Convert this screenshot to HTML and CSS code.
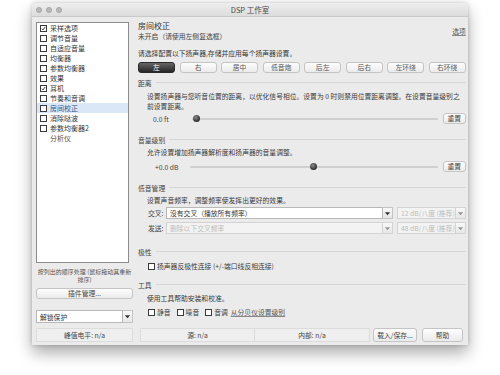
FILE: index.html
```html
<!DOCTYPE html>
<html lang="zh-CN">
<head>
<meta charset="utf-8">
<title>DSP 工作室</title>
<link rel="stylesheet" href="styles.css">
</head>
<body>
<div class="window">
  <div class="titlebar">
    <div class="lights"><span></span><span></span><span></span></div>
    <div class="title">DSP 工作室</div>
    <div></div>
  </div>
  <div class="body">
    <div class="left">
      <ul class="list">
        <li><span class="cb"><svg viewBox="0 0 8 8"><path d="M1.3 4.2 L3.2 6.2 L6.8 1.4"/></svg></span>采样选项</li>
        <li><span class="cb"></span>调节音量</li>
        <li><span class="cb"></span>自适应音量</li>
        <li><span class="cb"></span>均衡器</li>
        <li><span class="cb"></span>参数均衡器</li>
        <li><span class="cb"></span>效果</li>
        <li><span class="cb"><svg viewBox="0 0 8 8"><path d="M1.3 4.2 L3.2 6.2 L6.8 1.4"/></svg></span>耳机</li>
        <li><span class="cb"></span>节奏和音调</li>
        <li class="sel"><span class="cb"></span>房间校正</li>
        <li><span class="cb"></span>消除哒波</li>
        <li><span class="cb"></span>参数均衡器2</li>
        <li class="nocb">分析仪</li>
      </ul>
      <p class="hint">按列出的顺序处理 (鼠标拖动其重新排序)</p>
      <button class="btn plug">插件管理...</button>
      <div class="combo protect"><span class="field">解锁保护</span><span class="arrow"><svg viewBox="0 0 8 8"><path d="M1 2.5 L7 2.5 L4 6 Z"/></svg></span></div>
    </div>

    <div class="main">
      <div class="head">
        <div>
          <div class="title-main">房间校正</div>
          <div class="sub">未开启（请使用左侧复选框）</div>
        </div>
        <a class="link opt">选项</a>
      </div>
      <p class="instr">请选择配置以下扬声器,存储并应用每个扬声器设置。</p>
      <div class="speakers">
        <button class="btn spk on">左</button>
        <button class="btn spk">右</button>
        <button class="btn spk">居中</button>
        <button class="btn spk">低音炮</button>
        <button class="btn spk">后左</button>
        <button class="btn spk">后右</button>
        <button class="btn spk">左环绕</button>
        <button class="btn spk">右环绕</button>
      </div>

      <div class="ghead g-dist"><span>距离</span></div>
      <p class="desc d-dist">设置扬声器与您听音位置的距离，以优化信号相位。设置为 0 时则禁用位置距离调整。在设置音量级别之<br>前设置距离。</p>
      <div class="srow s-dist">
        <span class="sval">0.0 ft</span>
        <div class="slider"><span class="knob" style="left:2%"></span></div>
        <button class="btn reset">重置</button>
      </div>

      <div class="ghead g-vol"><span>音量级别</span></div>
      <p class="desc d-vol">允许设置增加扬声器解析度和扬声器的音量调整。</p>
      <div class="srow s-vol">
        <span class="sval">+0.0 dB</span>
        <div class="slider"><span class="knob" style="left:50%"></span></div>
        <button class="btn reset">重置</button>
      </div>

      <div class="ghead g-bass"><span>低音管理</span></div>
      <p class="desc d-bass">设置声音频率，调整频率使发挥出更好的效果。</p>
      <div class="crow c1">
        <span class="clabel">交叉:</span>
        <div class="combo big"><span class="field">没有交叉（播放所有频率）</span><span class="arrow"><svg viewBox="0 0 8 8"><path d="M1 2.5 L7 2.5 L4 6 Z"/></svg></span></div>
        <div class="combo small dis"><span class="field">12 dB/八度 (推荐)</span><span class="arrow"><svg viewBox="0 0 8 8"><path d="M1 2.5 L7 2.5 L4 6 Z"/></svg></span></div>
      </div>
      <div class="crow c2">
        <span class="clabel">发送:</span>
        <div class="combo big dis"><span class="field">删除以下交叉频率</span><span class="arrow"><svg viewBox="0 0 8 8"><path d="M1 2.5 L7 2.5 L4 6 Z"/></svg></span></div>
        <div class="combo small dis"><span class="field">48 dB/八度 (推荐)</span><span class="arrow"><svg viewBox="0 0 8 8"><path d="M1 2.5 L7 2.5 L4 6 Z"/></svg></span></div>
      </div>

      <div class="ghead g-pol"><span>极性</span></div>
      <div class="chrow ch-pol">
        <label class="chk"><span class="cb"></span>扬声器反极性连接 (+/-端口线反相连接)</label>
      </div>

      <div class="ghead g-tool"><span>工具</span></div>
      <p class="desc d-tool">使用工具帮助安装和校准。</p>
      <div class="chrow ch-tool">
        <label class="chk"><span class="cb"></span>静音</label>
        <label class="chk"><span class="cb"></span>噪音</label>
        <label class="chk"><span class="cb"></span>音调</label>
        <a class="link">从分贝仪设置级别</a>
      </div>
    </div>
  </div>

  <div class="status">
    <div class="seg s1">峰值电平: n/a</div>
    <div class="seg s2">源: n/a</div>
    <div class="seg s3">内部: n/a</div>
    <button class="btn sbtn load">载入/保存...</button>
    <button class="btn sbtn help">帮助</button>
  </div>
</div>
</body>
</html>
```

FILE: styles.css
```css
* { box-sizing: border-box; margin: 0; padding: 0; }
html, body { width: 500px; height: 375px; overflow: hidden; background: #fff; }
body {
  font-family: "Noto Sans CJK SC", "Liberation Sans", sans-serif;
  font-size: 6.8px;
  color: #363636;
}
button { font-family: inherit; font-size: inherit; color: inherit; }

.window {
  margin: 3px 0 0 32px;
  width: 436px;
  height: 342px;
  background: #ebebeb;
  border-radius: 4px 4px 0 0;
  box-shadow: 0 8px 16px rgba(0,0,0,.33), 0 0 4px rgba(0,0,0,.18);
  display: flex;
  flex-direction: column;
}

.titlebar {
  height: 14px;
  flex: none;
  display: grid;
  grid-template-columns: 1fr auto 1fr;
  align-items: center;
  background: linear-gradient(#eeeeee, #dcdcdc);
  border-bottom: 1px solid #c9c9c9;
  border-radius: 4px 4px 0 0;
}
.lights { display: flex; gap: 4px; padding-left: 4px; }
.lights span {
  width: 6px; height: 6px; border-radius: 50%;
  background: #b9b9b9;
  border: 0.5px solid #a5a5a5;
}
.title { font-size: 7.5px; color: #4a4a4a; }

.body {
  display: flex;
  gap: 5px;
  padding: 5px 5px 0 4px;
}

/* left column */
.left { width: 97px; flex: none; display: flex; flex-direction: column; }
.list {
  list-style: none;
  width: 93px;
  height: 241px;
  background: #fff;
  border: 1px solid #8c8c8c;
  font-size: 7px;
}
.list li {
  height: 10px;
  display: flex;
  align-items: center;
  gap: 3px;
  padding-left: 3px;
  color: #333;
}
.list li.sel { background: #d9e7f6; color: #35578a; }
.list li.nocb { padding-left: 13px; color: #555; }

.cb {
  width: 7px; height: 7px; flex: none;
  border: 1px solid #3a3a3a;
  background: #fff;
  display: inline-flex;
}
.cb svg { width: 100%; height: 100%; fill: none; stroke: #222; stroke-width: 1.4; }

.hint {
  margin-top: 5px;
  font-size: 6px;
  line-height: 8px;
  text-align: center;
  color: #555;
}

.btn {
  background: linear-gradient(#fdfdfd, #ebebeb);
  border: 1px solid #c4c4c4;
  border-radius: 3px;
  color: #444;
  display: flex;
  align-items: center;
  justify-content: center;
  line-height: 1;
  white-space: nowrap;
}
.plug { margin-top: 4px; height: 11px; width: 97px; }

.combo { display: flex; height: 12px; }
.combo .field {
  flex: 1;
  background: #fff;
  border: 1px solid #b8b8b8;
  display: flex;
  align-items: center;
  padding-left: 3px;
  white-space: nowrap;
  overflow: hidden;
}
.combo .arrow {
  width: 10px; flex: none;
  display: flex; align-items: center; justify-content: center;
  background: linear-gradient(#f8f8f8, #e6e6e6);
  border: 1px solid #c4c4c4;
  border-left: none;
}
.combo .arrow svg { width: 7px; height: 7px; fill: #333; }
.protect { margin-top: 11px; height: 13px; width: 97px; }
.protect .field { color: #333; }

/* main column */
.main { flex: 1; display: flex; flex-direction: column; }
.head { display: flex; justify-content: space-between; align-items: flex-start; margin-top: -1px; }
.title-main { font-size: 8px; line-height: 9px; color: #333; }
.sub { line-height: 12.5px; color: #444; }
.link { color: #555; text-decoration: underline; text-decoration-color: #888; white-space: nowrap; }
.opt { margin-top: 5px; line-height: 10px; }

.instr { margin-top: 5.5px; line-height: 10px; }

.speakers { margin-top: 4px; height: 11px; display: flex; gap: 4.5px; }
.spk { flex: 1; height: 11px; color: #555; }
.spk.on {
  background: linear-gradient(#666, #262626);
  border-color: #2a2a2a;
  color: #fff;
}

.ghead { display: flex; align-items: center; gap: 4px; line-height: 10px; color: #444; }
.ghead::after { content: ""; flex: 1; height: 1px; background: #d6d6d6; margin-top: -2px; }
.g-dist { margin-top: 5px; }
.g-vol { margin-top: 11px; }
.g-bass { margin-top: 11px; }
.g-pol { margin-top: 13px; }
.g-tool { margin-top: 9px; }

.desc { padding-left: 9px; line-height: 10px; color: #3a3a3a; }
.d-dist { margin-top: 3px; }
.d-vol { margin-top: 2px; }
.d-bass { margin-top: 2px; }
.d-tool { margin-top: 3px; }

.srow { display: flex; align-items: center; height: 11px; padding-left: 9px; }
.s-dist { margin-top: 2px; }
.s-vol { margin-top: 4px; }
.sval { width: 45px; padding-left: 6px; color: #444; white-space: nowrap; }
.s-vol .sval { width: 43px; padding-left: 8px; }
.slider { flex: 1; height: 11px; position: relative; display: flex; align-items: center; }
.slider::before { content: ""; flex: 1; height: 2px; background: #cfcfcf; border-radius: 1px; }
.knob {
  position: absolute; top: 2px;
  width: 7px; height: 7px; margin-left: -3.5px;
  border-radius: 50%;
  background: radial-gradient(circle at 40% 35%, #8a8a8a, #2e2e2e 70%);
}
.reset { width: 23px; height: 11px; margin-left: 5px; }

.crow { display: flex; align-items: center; height: 12px; padding-left: 10px; }
.c1 { margin-top: 2px; }
.c2 { margin-top: 3px; }
.clabel { width: 18px; flex: none; color: #444; white-space: nowrap; }
.crow .big { width: 227px; flex: none; margin-right: 4px; }
.crow .small { flex: 1; min-width: 0; }
.combo.dis .field { background: #f3f3f3; border-color: #d3d3d3; color: #bdbdbd; }
.combo.dis .arrow { border-color: #d3d3d3; }
.combo.dis .arrow svg { fill: #9a9a9a; }

.chrow { display: flex; align-items: center; height: 10px; padding-left: 10px; gap: 7px; }
.ch-pol { margin-top: 4px; }
.ch-tool { margin-top: 4px; gap: 6px; }
.chk { display: flex; align-items: center; gap: 2px; color: #3b3b3b; white-space: nowrap; }
.ch-tool .link { margin-left: -3px; }

/* status */
.status {
  margin: 5px 5px 3px 4px;
  height: 14px;
  display: flex;
}
.seg {
  display: flex; align-items: center; justify-content: center;
  background: #efefef;
  border: 1px solid #dcdcdc;
  color: #444;
  white-space: nowrap;
}
.s1 { width: 97px; }
.s2 { width: 115px; margin-left: 7px; }
.s3 { width: 115px; border-left: none; }
.sbtn { height: 14px; }
.load { width: 44px; margin-left: 3px; }
.help { width: 41px; margin-left: 5px; }
```
